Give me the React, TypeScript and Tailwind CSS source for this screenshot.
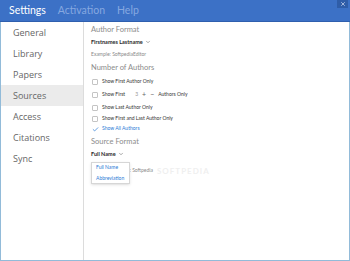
import { Check, ChevronDown, X } from 'lucide-react';

const navItems = ['General', 'Library', 'Papers', 'Sources', 'Access', 'Citations', 'Sync'];

const Box = ({ checked }: { checked?: boolean }) =>
  checked ? (
    <Check size={7} strokeWidth={2.5} className="text-[#2b7bd6] w-[7px]" />
  ) : (
    <span className="block w-[6px] h-[6px] border border-[#c4c4c4] rounded-[1px] bg-white" />
  );

const App = () => {
  return (
    <div
      className="w-[350px] h-[261px] bg-white flex flex-col overflow-hidden"
      style={{ fontFamily: 'Lato, "Open Sans", sans-serif' }}
    >
      <div className="h-[22px] bg-[#3c71c6] border-b border-[#2f5fae] flex items-center relative shrink-0">
        <div className="flex items-center gap-[12px] pl-[9px] text-[10.5px]">
          <span className="text-white">Settings</span>
          <span className="text-[#86a8e0]">Activation</span>
          <span className="text-[#86a8e0]">Help</span>
        </div>
        <div className="absolute right-[2px] top-0 w-[11px] h-[8px] bg-[#2f5da8] flex items-center justify-center">
          <X size={6} strokeWidth={3} className="text-[#c9d6ee]" />
        </div>
      </div>

      <div className="flex flex-1 border-l border-r border-b border-[#92bbd9]">
        <div
          className="w-[83px] border-r border-[#dcdcdc] flex flex-col"
          style={{ fontFamily: '"Open Sans", sans-serif' }}
        >
          {navItems.map(item => (
            <div
              key={item}
              className={`h-[21px] flex items-center pl-[12px] text-[9px] text-[#666] ${item === 'Sources' ? 'bg-[#ebebeb]' : ''}`}
            >
              {item}
            </div>
          ))}
        </div>

        <div className="flex-1 pl-[7px] pt-[2px] text-[#333]">
          <div className="text-[7.5px] text-[#8c8c8c] h-[12px] leading-[12px]">Author Format</div>
          <div className="flex items-center gap-[2px] text-[5.5px] font-bold text-[#2a2a2a] h-[12px]">
            Firstnames Lastname <ChevronDown size={6} className="text-[#555]" />
          </div>
          <div className="text-[5px] text-[#8a8a8a] h-[12px] leading-[12px]">Example: SoftpediaEditor</div>
          <div className="text-[7.5px] text-[#8c8c8c] h-[14px] leading-[14px] mt-[1px]">Number of Authors</div>

          <div className="flex flex-col text-[5px] text-[#333] mt-[1px]">
            <div className="flex items-center gap-[4px] h-[12px] pl-[1px]">
              <Box /> Show First Author Only
            </div>
            <div className="flex items-center gap-[4px] h-[13px] pl-[1px]">
              <Box /> Show First
              <span className="text-[#999] ml-[6px]">3</span>
              <span className="text-[#666] text-[7px] leading-none">+</span>
              <span className="text-[#666] text-[7px] leading-none">−</span>
              Authors Only
            </div>
            <div className="flex items-center gap-[4px] h-[13px] pl-[1px]">
              <Box /> Show Last Author Only
            </div>
            <div className="flex items-center gap-[4px] h-[10px] pl-[1px]">
              <Box /> Show First and Last Author Only
            </div>
            <div className="flex items-center gap-[3px] h-[10px] pl-[1px] text-[#2b7bd6]">
              <Box checked /> Show All Authors
            </div>
          </div>

          <div className="text-[7.5px] text-[#8c8c8c] h-[14px] leading-[14px] mt-[1px]">Source Format</div>
          <div className="flex items-center gap-[2px] text-[5.5px] font-bold text-[#2a2a2a] h-[10px]">
            Full Name <ChevronDown size={6} className="text-[#555]" />
          </div>
          <div className="relative h-[26px] mt-[3px]">
            <div className="text-[5px] text-[#8a8a8a] pt-[3px] flex items-center gap-[4px] pl-[20px]">
              Example: Softpedia
              <span className="text-[8px] font-bold tracking-[1px] text-[#efefef]">SOFTPEDIA</span>
            </div>
            <div className="absolute left-0 top-0 w-[39px] h-[22px] bg-white border border-[#d6d6d6] shadow-sm flex flex-col justify-center gap-[4px] pl-[4px] text-[5px] text-[#2b7bd6]">
              <span>Full Name</span>
              <span>Abbreviation</span>
            </div>
          </div>
        </div>
      </div>
    </div>
  );
};

export default App;
